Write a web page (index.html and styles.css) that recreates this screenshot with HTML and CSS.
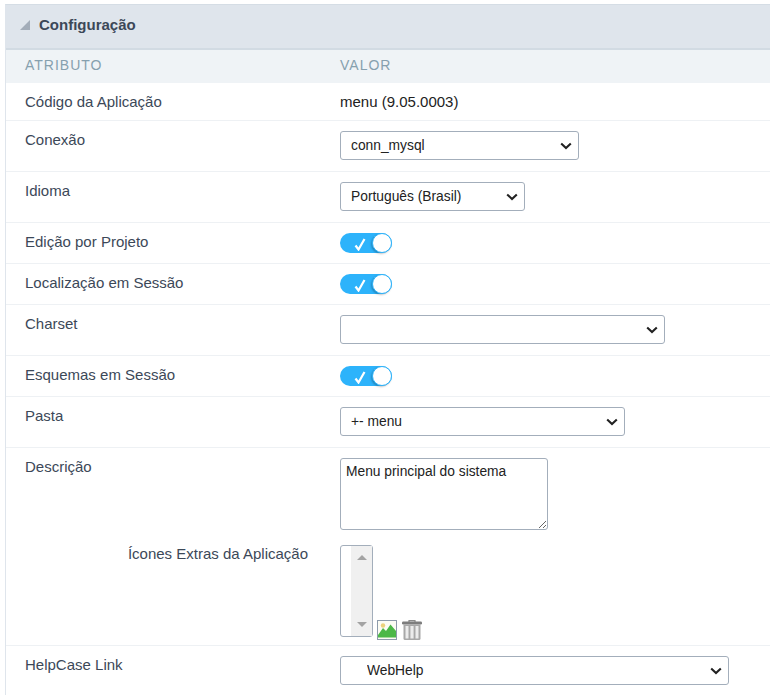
FILE: index.html
```html
<!DOCTYPE html>
<html lang="pt-BR">
<head>
<meta charset="utf-8">
<title>Configuração</title>
<link rel="stylesheet" href="styles.css">
</head>
<body>
<section class="panel">
  <header class="panel-title">
    <span class="collapse-arrow"></span>
    <h2>Configuração</h2>
  </header>
  <div class="row head">
    <div class="label">ATRIBUTO</div>
    <div class="value">VALOR</div>
  </div>
  <div class="row text-row">
    <div class="label">Código da Aplicação</div>
    <div class="value">menu (9.05.0003)</div>
  </div>
  <div class="row select-row">
    <div class="label">Conexão</div>
    <div class="value"><select class="w239"><option>conn_mysql</option></select></div>
  </div>
  <div class="row select-row">
    <div class="label">Idioma</div>
    <div class="value"><select class="w185"><option>Português (Brasil)</option></select></div>
  </div>
  <div class="row toggle-row">
    <div class="label">Edição por Projeto</div>
    <div class="value"><span class="toggle"><svg class="check" viewBox="0 0 12 13" width="12" height="13"><path d="M1.5 7.5 4.5 11.5 10.5 1" fill="none" stroke="#fff" stroke-width="2.2"/></svg><span class="knob"></span></span></div>
  </div>
  <div class="row toggle-row">
    <div class="label">Localização em Sessão</div>
    <div class="value"><span class="toggle"><svg class="check" viewBox="0 0 12 13" width="12" height="13"><path d="M1.5 7.5 4.5 11.5 10.5 1" fill="none" stroke="#fff" stroke-width="2.2"/></svg><span class="knob"></span></span></div>
  </div>
  <div class="row select-row">
    <div class="label">Charset</div>
    <div class="value"><select class="w325"><option></option></select></div>
  </div>
  <div class="row toggle-row">
    <div class="label">Esquemas em Sessão</div>
    <div class="value"><span class="toggle"><svg class="check" viewBox="0 0 12 13" width="12" height="13"><path d="M1.5 7.5 4.5 11.5 10.5 1" fill="none" stroke="#fff" stroke-width="2.2"/></svg><span class="knob"></span></span></div>
  </div>
  <div class="row select-row">
    <div class="label">Pasta</div>
    <div class="value"><select class="w285"><option>+- menu</option></select></div>
  </div>
  <div class="row desc-row">
    <div class="desc-line">
      <div class="label">Descrição</div>
      <div class="value"><textarea class="desc">Menu principal do sistema</textarea></div>
    </div>
    <div class="icons-line">
      <div class="label icons-label">Ícones Extras da Aplicação</div>
      <div class="value icons-value">
        <div class="listbox">
          <div class="scroll"><span class="tri-up"></span><span class="tri-down"></span></div>
        </div>
        <svg class="img-icon" viewBox="0 0 20 20" width="20" height="20">
          <rect x=".5" y=".5" width="19" height="19" fill="#fcfcf4" stroke="#8e9bab"/>
          <circle cx="6" cy="5.5" r="2.2" fill="#ecd27c"/>
          <path d="M1 15 6 8 9 11 13.5 4.5 19 11V15Z" fill="#4cb848"/>
          <rect x="1" y="15" width="18" height="2.5" fill="#4cb848"/>
        </svg>
        <svg class="trash-icon" viewBox="0 0 20 20" width="20" height="20">
          <path d="M7 2V.6H13V2" fill="none" stroke="#8a8a8a" stroke-width="1.2"/>
          <rect y="1.5" width="20" height="3" rx="1.2" fill="#7d7d7d"/>
          <path d="M1.5 4.5H18.5V18.5Q18.5 20 17 20H3Q1.5 20 1.5 18.5Z" fill="#a8a8a8"/>
          <path d="M3.5 6V18.4H6.5V6ZM8.4 6V18.4H11.6V6ZM13.5 6V18.4H16.5V6Z" fill="#ececec"/>
        </svg>
      </div>
    </div>
  </div>
  <div class="row select-row last">
    <div class="label">HelpCase Link</div>
    <div class="value"><select class="w389 indent"><option>WebHelp</option></select></div>
  </div>
</section>
</body>
</html>
```
FILE: styles.css
```css
html, body {
  margin: 0;
  padding: 0;
  background: #fff;
  height: 695px;
  overflow: hidden;
}
body {
  padding: 4px 0 0 5px;
  box-sizing: border-box;
  font-family: "Liberation Sans", Arial, sans-serif;
  font-size: 15px;
  line-height: 17px;
  color: #3c4858;
}
.panel {
  border-left: 1px solid #dfe5ec;
  border-top: 1px solid #d5dde5;
}
.panel-title {
  height: 43px;
  box-sizing: border-box;
  padding: 0 0 4px 14px;
  background: #dfe5ec;
  box-shadow: 0 2px 0 #d2dbe3;
  position: relative;
  display: flex;
  align-items: center;
  gap: 9px;
}
.panel-title h2 {
  margin: 0;
  font-size: 15px;
  font-weight: bold;
  color: #3c4858;
}
.collapse-arrow {
  width: 0;
  height: 0;
  border-left: 10px solid transparent;
  border-bottom: 10px solid #a3adb9;
}
.row {
  display: flex;
  border-bottom: 1px solid #eef1f4;
  padding-left: 19px;
}
.row.last { border-bottom: 0; }
.label { width: 315px; flex: none; }
.value { flex: 1; color: #222; }
.head {
  height: 31px;
  margin-top: 2px;
  padding-bottom: 2px;
  align-items: center;
  background: #eff3f6;
  border-bottom: 0;
  letter-spacing: 1px;
  font-size: 14px;
}
.head .label, .head .value { color: #86a0ae; }
.text-row { height: 37px; align-items: center; }
.select-row { padding-top: 10px; height: 40px; }
.toggle-row { height: 40px; align-items: center; }
.toggle-row .label { padding-bottom: 3px; }
select {
  display: block;
  height: 29px;
  border: 1px solid #a3aebb;
  border-radius: 3px;
  appearance: none;
  background: #fff url("data:image/svg+xml,%3Csvg xmlns='http://www.w3.org/2000/svg' width='12' height='8' viewBox='0 0 12 8'%3E%3Cpath d='M1.2 1.4 6 6 10.8 1.4' fill='none' stroke='%23222' stroke-width='2.1'/%3E%3C/svg%3E") no-repeat right 6px center;
  color: #222;
  font-family: "Liberation Sans", Arial, sans-serif;
  font-size: 13.8px;
  line-height: 25px;
  padding: 0 0 0 10px;
  outline: 0;
}
.w185 { width: 185px; }
.w239 { width: 239px; }
.w285 { width: 285px; }
.w325 { width: 325px; }
.w389 { width: 389px; }
.indent { padding-left: 26px; }
.toggle {
  position: relative;
  display: block;
  width: 52px;
  height: 20px;
  border-radius: 10px;
  background: #2db3fb;
}
.check { position: absolute; left: 14px; top: 5px; }
.knob {
  position: absolute;
  right: 0;
  top: 0;
  width: 18px;
  height: 18px;
  background: #fff;
  border: 1px solid #2db3fb;
  border-radius: 50%;
  box-shadow: -1px 1px 2px rgba(0,0,0,.25);
}
.desc-row { display: block; padding-top: 10px; height: 187px; }
.desc-line, .icons-line { display: flex; }
.desc {
  display: block;
  width: 208px;
  height: 72px;
  box-sizing: border-box;
  border: 1px solid #a3aebb;
  border-radius: 3px;
  padding: 4px 5px;
  margin: 0;
  font-family: "Liberation Sans", Arial, sans-serif;
  font-size: 13.8px;
  line-height: 17px;
  color: #222;
  outline: 0;
}
.icons-line { margin-top: 15px; }
.icons-label { text-align: right; padding-right: 32px; box-sizing: border-box; }
.icons-value { display: flex; align-items: flex-end; }
.listbox {
  position: relative;
  width: 33px;
  height: 92px;
  box-sizing: border-box;
  border: 1px solid #a3aebb;
  border-radius: 3px;
  background: #fff;
  display: flex;
  justify-content: flex-end;
}
.scroll {
  position: relative;
  width: 21px;
  background: #f0f0f0;
}
.tri-up, .tri-down {
  position: absolute;
  left: 6px;
  width: 0;
  height: 0;
  border-left: 5px solid transparent;
  border-right: 5px solid transparent;
}
.tri-up { top: 9px; border-bottom: 5px solid #a3a3a3; }
.tri-down { bottom: 9px; border-top: 5px solid #a3a3a3; }
.img-icon { margin: 0 0 -3px 4px; }
.trash-icon { margin: 0 0 -3px 5px; }
```
